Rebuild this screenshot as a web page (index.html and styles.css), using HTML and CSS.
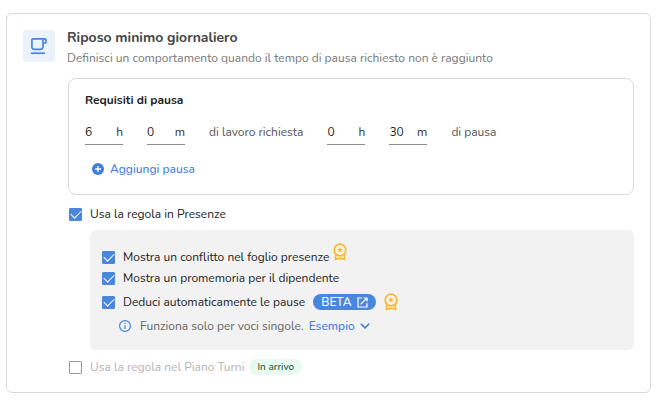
FILE: index.html
```html
<!DOCTYPE html>
<html lang="it">

<head>
    <meta charset="utf-8">
    <meta name="viewport" content="width=device-width, initial-scale=1">
    <title>Riposo minimo giornaliero</title>
    <link rel="stylesheet" href="styles.css">
</head>

<body>
    <svg class="sprite" width="0" height="0" aria-hidden="true">
        <symbol id="medal" viewBox="0 0 14 18">
            <circle cx="7" cy="7" r="5.8" fill="none" stroke="currentColor" stroke-width="1.8" />
            <path d="M7 4l.8 1.9 2.1.2-1.6 1.4.5 2L7 8.4 5.2 9.5l.5-2L4.1 6.1l2.1-.2z" fill="currentColor" />
            <path d="M2.6 11.4v5L7 15.2l4.4 1.2v-5" fill="none" stroke="currentColor" stroke-width="1.8" />
        </symbol>
    </svg>

    <section class="card">
        <header class="card-header">
            <div class="card-icon">
                <svg width="18" height="18" viewBox="0 0 18 18" fill="none" stroke="currentColor" stroke-width="1.7" stroke-linejoin="round">
                    <path d="M3 1.9h12a1 1 0 0 1 1 1V5a1 1 0 0 1-1 1h-2" />
                    <path d="M13 1.9v8.1a2.4 2.4 0 0 1-2.4 2.4H4.3A2.4 2.4 0 0 1 1.900 10V3a1.100 1.100 0 0 1 1.100-1.100" />
                    <path d="M1 16.200h14" />
                </svg>
            </div>
            <div>
                <h1>Riposo minimo giornaliero</h1>
                <p>Definisci un comportamento quando il tempo di pausa richiesto non è raggiunto</p>
            </div>
        </header>

        <div class="card-body">
            <div class="requirements">
                <h2>Requisiti di pausa</h2>
                <div class="fields">
                    <label class="field"><input type="text" value="6"><span>h</span></label>
                    <label class="field"><input type="text" value="0"><span>m</span></label>
                    <span class="field-text">di lavoro richiesta</span>
                    <label class="field"><input type="text" value="0"><span>h</span></label>
                    <label class="field"><input type="text" value="30"><span>m</span></label>
                    <span class="field-text">di pausa</span>
                </div>
                <button class="add-button" type="button">
                    <svg width="12" height="12" viewBox="0 0 12 12">
                        <circle cx="6" cy="6" r="6" fill="currentColor" />
                        <path d="M6 3v6M3 6h6" stroke="#fff" stroke-width="1.3" />
                    </svg>
                    Aggiungi pausa
                </button>
            </div>

            <div class="option">
                <input type="checkbox" id="presenze" checked>
                <label for="presenze">Usa la regola in Presenze</label>
            </div>

            <div class="panel">
                <div class="option">
                    <input type="checkbox" id="conflitto" checked>
                    <label for="conflitto">Mostra un conflitto nel foglio presenze</label>
                    <svg class="medal medal-raised" width="14" height="18"><use href="#medal" /></svg>
                </div>
                <div class="option">
                    <input type="checkbox" id="promemoria" checked>
                    <label for="promemoria">Mostra un promemoria per il dipendente</label>
                </div>
                <div class="option option-tall">
                    <input type="checkbox" id="deduci" checked>
                    <label for="deduci">Deduci automaticamente le pause</label>
                    <a class="beta" href="#">BETA
                        <svg width="11" height="11" viewBox="0 0 11 11" fill="none" stroke="currentColor" stroke-width="1.2">
                            <path d="M4.8 1H1v9h9V6.2M6.5 1H10v3.5M10 1L3.6 7.4" />
                        </svg>
                    </a>
                    <svg class="medal" width="14" height="18"><use href="#medal" /></svg>
                </div>
                <div class="info">
                    <svg width="12" height="12" viewBox="0 0 12 12">
                        <circle cx="6" cy="6" r="5.4" fill="none" stroke="currentColor" stroke-width="1.2" />
                        <path d="M6 5.2V9M6 2.9v1.2" stroke="currentColor" stroke-width="1.2" />
                    </svg>
                    <span>Funziona solo per voci singole.</span>
                    <button class="example-button" type="button">Esempio
                        <svg width="10" height="6" viewBox="0 0 10 6" fill="none" stroke="currentColor" stroke-width="1.6">
                            <path d="M.8.7L5 4.9 9.2.7" />
                        </svg>
                    </button>
                </div>
            </div>

            <div class="option option-disabled">
                <input type="checkbox" id="turni" disabled>
                <label for="turni">Usa la regola nel Piano Turni</label>
                <span class="soon">In arrivo</span>
            </div>
        </div>
    </section>
</body>

</html>
```
FILE: styles.css
```css
* {
    box-sizing: border-box;
}

body {
    font-family: Nunito, "Noto Sans", sans-serif;
    font-size: 12px;
    line-height: 16px;
    color: #333;
    background-color: #fff;
    margin: 13px 10px 8px 6px;
}

svg {
    display: block;
    flex-shrink: 0;
}

.sprite {
    position: absolute;
}

h1,
h2,
p {
    margin: 0;
}

button,
input {
    font: inherit;
}

.card {
    border: 1px solid #d9d9d9;
    border-radius: 6px;
    padding: 16px 16px 17px;
}

.card-header {
    display: flex;
    gap: 12px;
}

.card-icon {
    display: flex;
    align-items: center;
    justify-content: center;
    width: 32px;
    height: 32px;
    border-radius: 4px;
    background-color: #ebf2fc;
    color: #4a86dd;
}

.card-header h1 {
    font-size: 14px;
    font-weight: 700;
    line-height: 16px;
    color: #444;
}

.card-header p {
    margin-top: 4px;
    color: #777;
}

.card-body {
    margin: 12px 0 0 45px;
}

.requirements {
    border: 1px solid #d9d9d9;
    border-radius: 8px;
    padding: 13px 16px 17px;
    margin-bottom: 11px;
}

.requirements h2 {
    font-size: 12px;
    font-weight: 700;
    color: #222;
}

.fields {
    display: flex;
    gap: 24px;
    margin-top: 12px;
}

.field {
    display: flex;
    align-items: center;
    width: 38px;
    height: 25px;
    border-bottom: 1px solid #8c8c8c;
}

.field input {
    flex: 1;
    min-width: 0;
    padding: 0;
    border: none;
    outline: none;
    background: none;
    color: #222;
}

.field-text {
    line-height: 24px;
    color: #555;
}

.add-button {
    display: flex;
    align-items: center;
    gap: 6px;
    margin: 16px 0 0 7px;
    padding: 0;
    border: none;
    background: none;
    color: #3f7fdb;
    font-weight: 500;
    cursor: pointer;
}

.option {
    display: flex;
    align-items: center;
    gap: 8px;
    min-height: 16px;
    padding-left: 1px;
    color: #222;
}

.option input {
    appearance: none;
    display: grid;
    place-items: center;
    flex-shrink: 0;
    width: 13px;
    height: 13px;
    margin: 0;
    border: 1px solid #999;
    border-radius: 1px;
    background-color: #fff;
}

.option input:checked {
    border-color: #4a86dd;
    background-color: #4a86dd;
}

.option input:checked::before {
    content: "";
    width: 9px;
    height: 5px;
    margin-bottom: 2px;
    border: solid #fff;
    border-width: 0 0 1px 1px;
    transform: rotate(-45deg);
}

.panel {
    display: flex;
    flex-direction: column;
    gap: 5px;
    margin: 8px 0 9px 22px;
    padding: 19px 11px 16px;
    border-radius: 6px;
    background-color: #f2f2f2;
}

.medal {
    color: #fbb92f;
}

.medal-raised {
    margin: -10px 0 0 -4px;
}

.option-tall {
    min-height: 22px;
}

.beta {
    display: flex;
    align-items: center;
    gap: 6px;
    height: 16px;
    padding: 0 8px;
    border-radius: 8px;
    background-color: #4a86dd;
    color: #fff;
    font-weight: 500;
    text-decoration: none;
}

.info {
    display: flex;
    align-items: center;
    padding-left: 18px;
    color: #3f7fdb;
}

.info span {
    margin: 0 5px 0 9px;
    color: #666;
}

.example-button {
    display: flex;
    align-items: center;
    gap: 5px;
    padding: 0;
    border: none;
    background: none;
    color: #3f7fdb;
    font-weight: 500;
    cursor: pointer;
}

.option-disabled {
    color: #b5b5b5;
}

.soon {
    padding: 0 8px;
    margin-left: -3px;
    border-radius: 8px;
    background-color: #e6faef;
    color: #1c5c3c;
    font-size: 10px;
    font-weight: 500;
}
```
